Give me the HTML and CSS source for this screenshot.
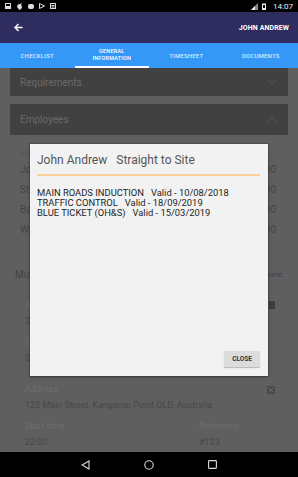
FILE: index.html
```html
<!DOCTYPE html>
<html>
<head>
<meta charset="utf-8">
<link rel="stylesheet" href="styles.css">
</head>
<body>
<div class="screen">
  <div class="status">
    <div class="st-left">
      <svg width="6" height="6" viewBox="0 0 6 6"><rect x="0.5" y="0.5" width="5" height="5" fill="none" stroke="#ddd"/><rect x="1" y="3" width="4" height="2" fill="#ddd"/></svg>
      <svg width="7" height="7" viewBox="0 0 7 7"><path d="M1 4 Q1 1 4 1 L6 0 L5 2 Q7 4 5 6 L3 7 L2 5 Z" fill="#ddd"/></svg>
      <svg width="6" height="6" viewBox="0 0 6 6"><rect x="0" y="1" width="6" height="5" rx="2" fill="#ddd"/></svg>
      <svg width="6" height="6" viewBox="0 0 6 6"><path d="M0.5 0.5 L5.5 3 L0.5 5.5 Z" fill="none" stroke="#ddd"/></svg>
      <svg width="6" height="6" viewBox="0 0 6 6"><rect x="0.5" y="0.5" width="5" height="5" fill="none" stroke="#ddd"/><path d="M1.5 2.5 H4.5 M1.5 4 H4.5" stroke="#ddd"/></svg>
    </div>
    <div class="st-right">
      <svg width="7" height="7" viewBox="0 0 7 7"><path d="M7 0 V7 H0 Z" fill="#888"/><path d="M4 3 V7 H0 Z" fill="#eee"/></svg>
      <svg width="4" height="7" viewBox="0 0 4 7"><rect x="0" y="0.5" width="4" height="6.5" rx="0.5" fill="#eee"/><rect x="1" y="2" width="2" height="3" fill="#000"/></svg>
      <span class="clock">14:07</span>
    </div>
  </div>

  <header class="appbar">
    <svg class="back" width="9" height="9" viewBox="0 0 9 9"><path d="M8.5 4.5 H1.5 M4.5 1 L1 4.5 L4.5 8" fill="none" stroke="#fff" stroke-width="1.4"/></svg>
    <span class="title">JOHN ANDREW</span>
  </header>

  <nav class="tabs">
    <div class="tab">CHECKLIST</div>
    <div class="tab active">GENERAL<br>INFORMATION</div>
    <div class="tab">TIMESHEET</div>
    <div class="tab">DOCUMENTS</div>
  </nav>

  <main class="content">
    <div class="card">
      <span>Requirements</span>
      <svg width="10" height="6" viewBox="0 0 10 6"><path d="M0.5 0.5 L5 5 L9.5 0.5" fill="none" stroke="#555" stroke-width="1"/></svg>
    </div>
    <div class="card card-open">
      <span>Employees</span>
      <svg width="10" height="6" viewBox="0 0 10 6"><path d="M0.5 5.5 L5 1 L9.5 5.5" fill="none" stroke="#555" stroke-width="1"/></svg>
    </div>

    <div class="employees">
      <div class="emp-head">Name</div>
      <div class="emp-row"><span>John Andrew</span><span>05:30</span></div>
      <div class="emp-row"><span>Steve Parker</span><span>06:00</span></div>
      <div class="emp-row"><span>Barry Collins</span><span>06:30</span></div>
      <div class="emp-row"><span>Wyatt Smith</span><span>06:30</span></div>
    </div>

    <div class="multi"><span>Multiple Shifts</span><span class="multi-btn">UPDATE</span></div>

    <div class="fields">
      <div class="field">
        <div class="label">Arrival</div>
        <div class="value">22:00</div>
        <span class="chk"></span>
      </div>
      <div class="field">
        <div class="label">Shift</div>
        <div class="value">0</div>
      </div>
      <div class="field field-addr">
        <div class="label">Address</div>
        <div class="value">123 Main Street, Kangaroo Point QLD, Australia,</div>
        <svg class="xbox" width="8" height="8" viewBox="0 0 8 8"><rect width="8" height="8" fill="#4a4a4a"/><path d="M2 2 L6 6 M6 2 L2 6" stroke="#6a6a6a" stroke-width="1"/></svg>
      </div>
      <div class="field-pair">
        <div class="field">
          <div class="label">Start time</div>
          <div class="value">22:00</div>
        </div>
        <div class="field field-ref">
          <div class="label">Reference</div>
          <div class="value">#123</div>
        </div>
      </div>
    </div>
  </main>

  <div class="navbar">
    <svg width="9" height="10" viewBox="0 0 9 10"><path d="M8 1 L1 5 L8 9 Z" fill="none" stroke="#ddd" stroke-width="1.1"/></svg>
    <svg width="10" height="10" viewBox="0 0 10 10"><circle cx="5" cy="5" r="4.2" fill="none" stroke="#ddd" stroke-width="1.1"/></svg>
    <svg width="9" height="9" viewBox="0 0 9 9"><rect x="0.6" y="0.6" width="7.8" height="7.8" rx="0.8" fill="none" stroke="#ddd" stroke-width="1.1"/></svg>
  </div>

  <div class="dialog">
    <div class="dlg-title"><span>John Andrew</span><span class="dlg-sub">Straight to Site</span></div>
    <div class="dlg-rule"></div>
    <ul class="dlg-list">
      <li><span>MAIN ROADS INDUCTION</span><span>Valid - 10/08/2018</span></li>
      <li><span>TRAFFIC CONTROL</span><span>Valid - 18/09/2019</span></li>
      <li><span>BLUE TICKET (OH&amp;S)</span><span>Valid - 15/03/2019</span></li>
    </ul>
    <button class="dlg-btn">CLOSE</button>
  </div>
</div>
</body>
</html>
```

FILE: styles.css
```css
* { box-sizing: border-box; }
html, body { margin: 0; padding: 0; }
body {
  width: 298px;
  height: 477px;
  overflow: hidden;
  font-family: Roboto, "Noto Sans", "Liberation Sans", sans-serif;
  background: #000;
}
.screen {
  position: relative;
  width: 298px;
  height: 477px;
  overflow: hidden;
  display: flex;
  flex-direction: column;
}

/* status bar */
.status {
  height: 12px;
  flex: none;
  background: #000;
  display: flex;
  align-items: center;
  justify-content: space-between;
  padding: 0 5px 0 5px;
}
.st-left { display: flex; align-items: center; gap: 5px; }
.st-left svg { display: block; }
.st-right { display: flex; align-items: center; gap: 4px; }
.st-right svg { display: block; }
.clock { color: #eee; font-size: 8px; margin-left: 3px; }

/* app bar */
.appbar {
  height: 31px;
  flex: none;
  background: #2f2d5f;
  display: flex;
  align-items: center;
  justify-content: space-between;
  padding: 0 9px 0 14px;
}
.back { display: block; }
.title {
  color: #fff;
  font-weight: 700;
  font-size: 7px;
  letter-spacing: 0.1px;
}

/* tabs */
.tabs {
  height: 25px;
  flex: none;
  background: #3698f6;
  display: flex;
}
.tab {
  flex: 1;
  display: flex;
  align-items: center;
  justify-content: center;
  text-align: center;
  color: #d6eaff;
  font-size: 6px;
  font-weight: 500;
  line-height: 7px;
  letter-spacing: 0.2px;
  border-bottom: 2px solid transparent;
  padding-top: 1px;
}
.tab.active { color: #fff; border-bottom-color: #fff; font-size: 5.5px; }

/* content (dimmed by the dialog) */
.content {
  flex: none;
  height: 384px;
  background: #5f5f5f;
  padding: 0 10px;
  overflow: hidden;
}
.card {
  height: 28px;
  background: #414141;
  display: flex;
  align-items: center;
  justify-content: space-between;
  padding: 0 11px 0 10px;
  color: #6a6a6a;
  font-size: 10px;
}
.card-open { height: 31px; margin-top: 8px; }
.card svg { display: block; }

.employees { margin-top: 12px; padding: 0 12px 0 10px; }
.emp-head { height: 12px; line-height: 12px; font-size: 7px; color: #555; }
.emp-row {
  height: 20px;
  display: flex;
  align-items: center;
  justify-content: space-between;
  font-size: 10px;
  color: #454545;
}

.multi {
  margin-top: 25px;
  height: 20px;
  display: flex;
  align-items: center;
  justify-content: space-between;
  padding: 0 6px 0 5px;
  font-size: 10px;
  color: #444;
}
.multi-btn { font-size: 6px; font-weight: 700; color: #3f4556; }

.fields { margin-top: 13px; padding: 0 15px; }
.field { position: relative; height: 32px; margin-bottom: 5px; }
.field .label { height: 16px; line-height: 16px; font-size: 9px; color: #6e6e6e; }
.field .value { height: 16px; line-height: 16px; font-size: 9px; color: #484848; white-space: nowrap; }
.field-addr { margin-top: 15px; }
.chk {
  position: absolute;
  right: -2px;
  top: 4px;
  width: 6px;
  height: 8px;
  background: #3d3d3d;
}
.xbox { position: absolute; right: -2px; top: 5px; display: block; }
.field-pair { display: flex; margin-top: 1px; }
.field-pair .field { flex: none; width: 174px; }
.field-pair .field-ref { width: auto; }

/* nav bar */
.navbar {
  flex: none;
  height: 25px;
  background: #000;
  display: flex;
  align-items: center;
  justify-content: center;
  gap: 54px;
}
.navbar svg { display: block; }

/* dialog */
.dialog {
  position: absolute;
  left: 30px;
  top: 144px;
  width: 238px;
  height: 232px;
  background: #f2f2f2;
  box-shadow: 0 0 0 1px rgba(0,0,0,0.12), 0 1px 3px rgba(0,0,0,0.35);
  padding: 8px 8px 9px 7px;
  display: flex;
  flex-direction: column;
}
.dlg-title {
  height: 16px;
  line-height: 16px;
  font-size: 12px;
  color: #555;
  display: flex;
  gap: 9px;
}
.dlg-rule {
  margin-top: 6px;
  height: 1.5px;
  background: #fdcf99;
}
.dlg-list {
  list-style: none;
  margin: 12px 0 0 0;
  padding: 0;
}
.dlg-list li {
  font-size: 9.4px;
  line-height: 10.3px;
  color: #1e1e1e;
  display: flex;
  gap: 7px;
}
.dlg-btn {
  margin-top: auto;
  align-self: flex-end;
  width: 36px;
  height: 16px;
  padding: 0;
  border: none;
  border-radius: 1px;
  background: #dcdcdc;
  box-shadow: 0 1px 1px rgba(0,0,0,0.25);
  font-family: Roboto, "Liberation Sans", sans-serif;
  font-size: 6.5px;
  font-weight: 700;
  color: #333;
}
```
